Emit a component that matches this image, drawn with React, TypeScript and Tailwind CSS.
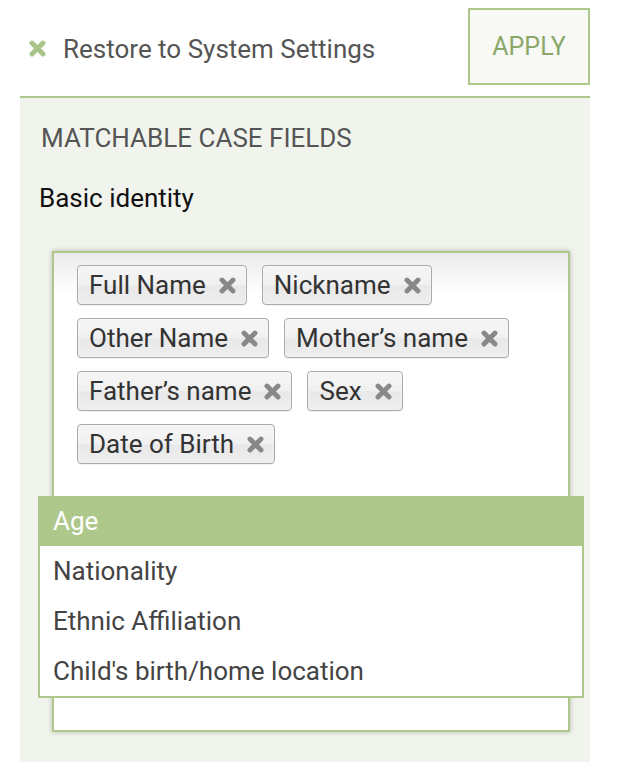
import React from "react";

const chips = [
  "Full Name",
  "Nickname",
  "Other Name",
  "Mother’s name",
  "Father’s name",
  "Sex",
  "Date of Birth",
];

const options = ["Age", "Nationality", "Ethnic Affiliation", "Child's birth/home location"];

function XIcon({ className }: { className?: string }) {
  return (
    <svg viewBox="0 0 16 16" className={className} aria-hidden="true">
      <path
        d="M2.8 2.8 L13.2 13.2 M13.2 2.8 L2.8 13.2"
        stroke="currentColor"
        strokeWidth="4.6"
        strokeLinecap="round"
        fill="none"
      />
    </svg>
  );
}

export default function App() {
  return (
    <div className="min-h-[762px] bg-white font-['Roboto','Liberation_Sans',sans-serif]">
      <div className="ml-[20px] w-[570px]">
        {/* top bar */}
        <div className="flex items-center justify-between pt-2 pb-[11px]">
          <button className="mt-[4px] flex items-center gap-[17px] pl-[9px] text-[26px] leading-[30px] text-[#555]">
            <XIcon className="h-[17px] w-[17px] text-[#a9c48a]" />
            <span>Restore to System Settings</span>
          </button>
          <button className="h-[77px] w-[122px] border-2 border-[#aec78b] bg-[#f8f8f4] text-[25px] text-[#8ba86a]">
            APPLY
          </button>
        </div>

        {/* panel */}
        <div className="border-t-2 border-[#aec78b] bg-[#f1f4ec] pb-[30px]">
          <h2 className="pl-[21px] pt-[25px] text-[26px] leading-[30px] text-[#555]">
            MATCHABLE CASE FIELDS
          </h2>
          <p className="mt-[30px] pl-[19px] text-[26px] leading-[30px] text-[#111]">
            Basic identity
          </p>

          <div className="relative ml-[32px] mr-[20px] mt-[38px] h-[481px] border-2 border-[#aec78b] bg-[linear-gradient(#ebebeb_0px,#ffffff_40px)] shadow-[0_0_5px_rgba(0,0,0,0.25)]">
            <ul className="flex flex-wrap gap-x-[15px] gap-y-[13px] pl-[23px] pr-4 pt-[12px]">
              {chips.map((c) => (
                <li
                  key={c}
                  className="flex h-[40px] items-center gap-[13px] rounded-[4px] border border-[#aaa] bg-[linear-gradient(#f4f4f4_20%,#f0f0f0_50%,#e8e8e8_52%,#eeeeee_100%)] pl-[11px] pr-[10px] text-[26px] text-[#333] shadow-[inset_0_0_2px_#fff,0_1px_0_rgba(0,0,0,0.05)]"
                >
                  <span>{c}</span>
                  <XIcon className="h-[17px] w-[17px] text-[#888]" />
                </li>
              ))}
            </ul>

            {/* dropdown */}
            <ul className="absolute left-[-16px] right-[-16px] top-[243px] border-2 border-[#aec78b] bg-white text-[26px] text-[#444]">
              {options.map((o, i) => (
                <li
                  key={o}
                  className={`flex h-[50px] items-center pl-[13px] ${
                    i === 0 ? "-mt-[2px] bg-[#aec78b] text-white" : ""
                  }`}
                >
                  {o}
                </li>
              ))}
            </ul>
          </div>
        </div>
      </div>
    </div>
  );
}
